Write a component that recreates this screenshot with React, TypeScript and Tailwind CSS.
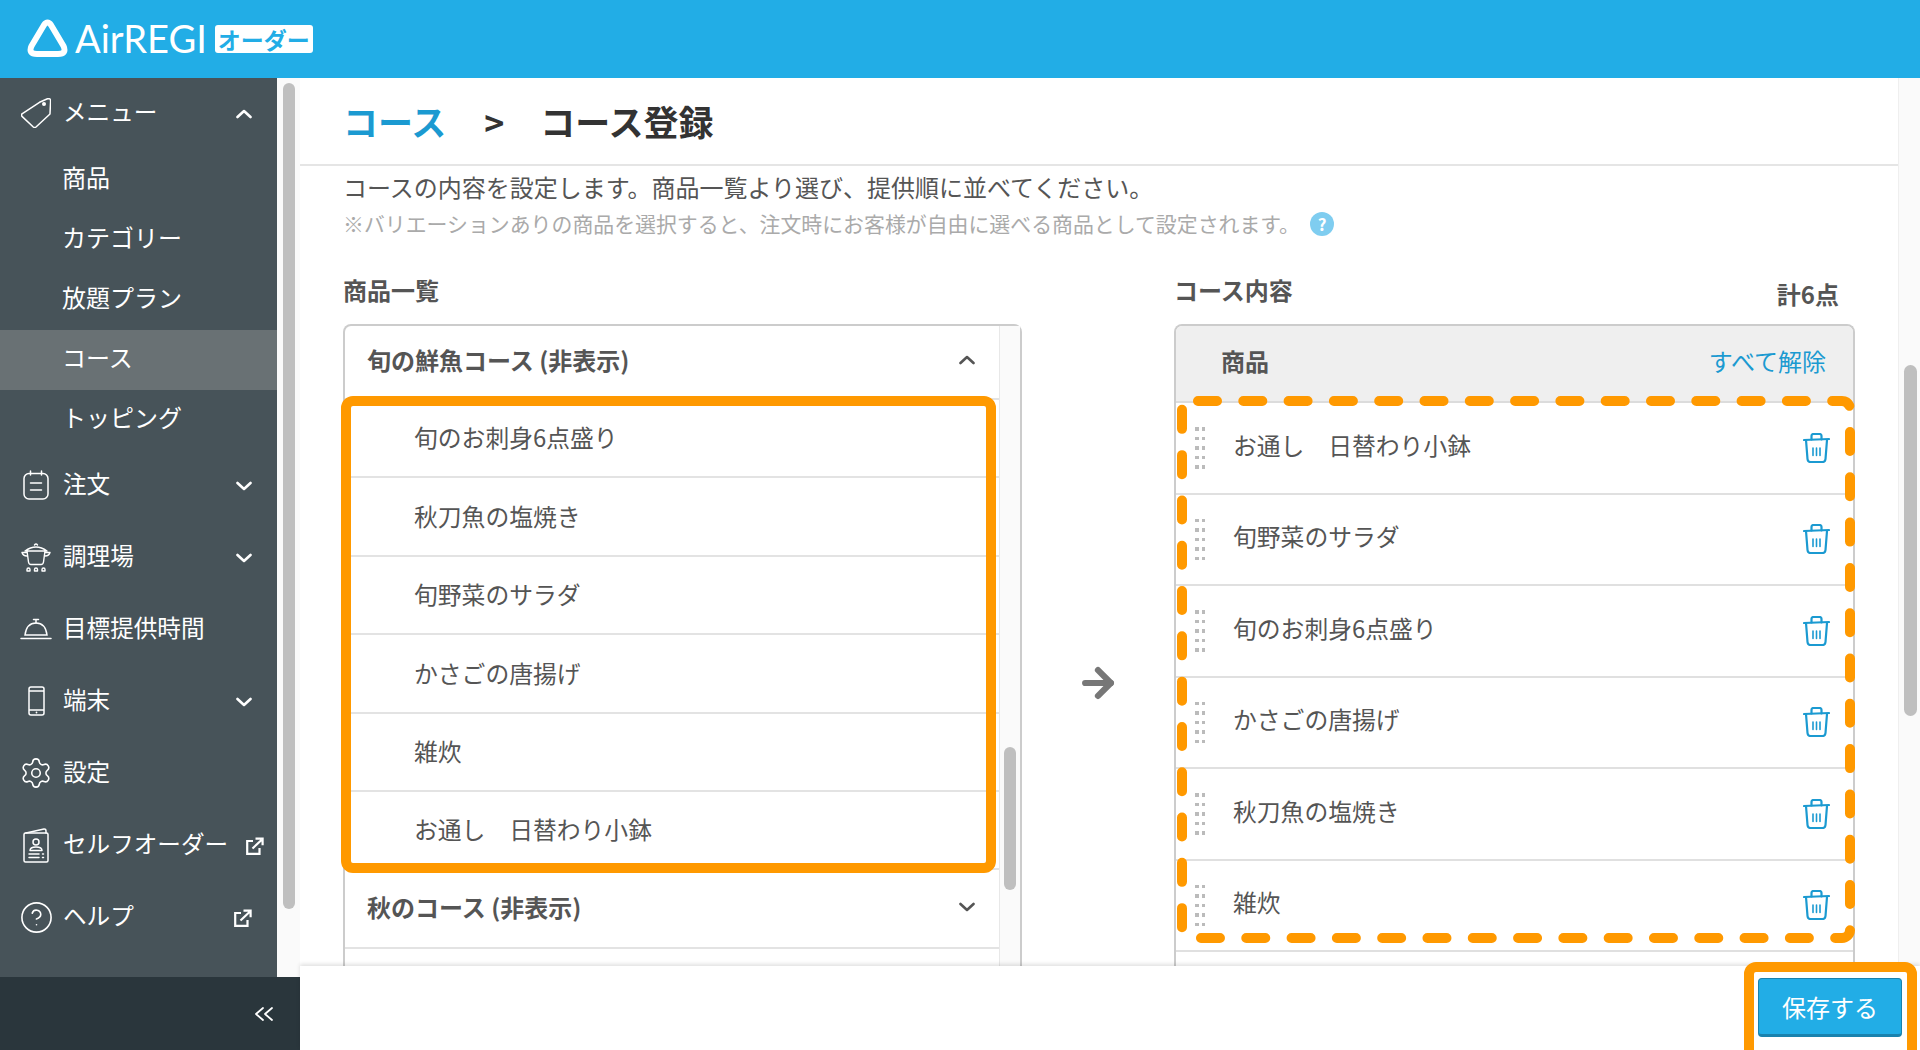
import { ArrowRight, CircleHelp, Settings } from 'lucide-react';
import type { ReactNode } from 'react';

const FONT = 'font-["Noto_Sans_CJK_JP","Noto_Sans",sans-serif]';

function Chevron({ up = false, color = '#fff' }: { up?: boolean; color?: string }) {
  return (
    <svg width="16" height="10" viewBox="0 0 16 10" fill="none" className={up ? '' : 'rotate-180'}>
      <path d="M1.5 8 L8 2 L14.5 8" stroke={color} strokeWidth="2.6" strokeLinecap="round" strokeLinejoin="round" />
    </svg>
  );
}

function ExternalIcon() {
  return (
    <svg width="18" height="18" viewBox="0 0 18 18" fill="none" stroke="#fff" strokeWidth="2.2">
      <path d="M7 4 H1.2 V16.8 H13.5 V11" />
      <path d="M6.5 11.5 L15.5 3 M9.5 1.6 H16.6 V8.2" />
    </svg>
  );
}

function TagIcon() {
  return (
    <svg width="30" height="30" viewBox="0 0 30 30" fill="none" stroke="#fff" strokeWidth="1.5" strokeLinejoin="round">
      <path d="M18.5 4.3 L26.5 0.8 Q29.6 0 29.6 3 L29 16 L15 29 Q13.6 30 12.3 29 L1 18.4 Q0 17 1 15.8 Z" />
      <circle cx="23" cy="6" r="2" fill="#fff" stroke="none" />
    </svg>
  );
}

function OrderIcon() {
  return (
    <svg width="26" height="30" viewBox="0 0 26 30" fill="none" stroke="#fff" strokeWidth="1.5" strokeLinecap="round">
      <rect x="1" y="3.5" width="24" height="25.5" rx="5" />
      <path d="M7.5 1 V5 M18.5 1 V5 M7.5 13 H18.5 M7.5 20 H18.5" />
    </svg>
  );
}

function PotIcon() {
  return (
    <svg width="30" height="30" viewBox="0 0 30 30" fill="none" stroke="#fff" strokeWidth="1.4" strokeLinecap="round" strokeLinejoin="round">
      <path d="M13.5 3 Q15 1 16.5 3" />
      <path d="M4 9 Q15 1 26 9 Z" />
      <path d="M6 9 L7.5 20 Q7.8 22.5 10 22.5 H20 Q22.2 22.5 22.5 20 L24 9" />
      <path d="M1 10.5 H5.5 M24.5 10.5 H29 M1 10.5 Q2 14 6 14 M29 10.5 Q28 14 24 14" />
      <path d="M6 29 V27.5 A1.2 1.2 0 0 1 9 27.5 V29 Z M13.5 29 V27.5 A1.2 1.2 0 0 1 16.5 27.5 V29 Z M21 29 V27.5 A1.2 1.2 0 0 1 24 27.5 V29 Z" />
    </svg>
  );
}

function ClocheIcon() {
  return (
    <svg width="32" height="22" viewBox="0 0 32 22" fill="none" stroke="#fff" strokeWidth="1.5" strokeLinecap="round">
      <path d="M16 5 V2 M13.5 1.5 H18.5" />
      <path d="M5 17 Q6.5 5 16 5 Q25.5 5 27 17 Z" />
      <path d="M1 20.5 H31" />
    </svg>
  );
}

function PhoneIcon() {
  return (
    <svg width="17" height="30" viewBox="0 0 17 30" fill="none" stroke="#fff" strokeWidth="1.5">
      <rect x="1" y="1" width="15" height="28" rx="2" />
      <path d="M1 5 H16 M1 24 H16" />
      <circle cx="8.5" cy="26.5" r="0.9" fill="#fff" stroke="none" />
    </svg>
  );
}

function BookIcon() {
  return (
    <svg width="26" height="35" viewBox="0 0 26 35" fill="none" stroke="#fff" strokeWidth="1.5" strokeLinecap="round" strokeLinejoin="round">
      <rect x="1" y="5" width="24" height="29" rx="1.5" />
      <path d="M3 5 L21 1 Q23 0.8 23 3 V5" />
      <circle cx="13" cy="14" r="3" />
      <path d="M7 22.5 Q7 19 13 19 Q19 19 19 22.5 Z" />
      <path d="M6 26 H16 M6 29.5 H16 M19.5 26 H20.5 M19.5 29.5 H20.5" />
    </svg>
  );
}

function TrashIcon() {
  return (
    <svg width="27" height="30" viewBox="0 0 27 30" fill="none" stroke="#1b9ad1" strokeWidth="2.2" strokeLinecap="round" strokeLinejoin="round" className="shrink-0">
      <path d="M1 7 L26 6" />
      <path d="M8.5 6.5 V2.8 Q8.5 1 10.5 1 H16.5 Q18.5 1 18.5 2.8 V6.5" />
      <path d="M3 7 L4.5 26 Q4.8 29 7.5 29 H19.5 Q22.2 29 22.5 26 L24 7" />
      <path d="M10 15 V22.5 M13.5 15 V22.5 M17 15 V22.5" strokeWidth="1.6" />
    </svg>
  );
}

function MenuRow({ icon, label, right }: { icon: ReactNode; label: string; right?: ReactNode }) {
  return (
    <div className="h-[72px] flex items-center text-white text-[23.6px]">
      <div className="w-[72px] pb-[2px] flex justify-center shrink-0">{icon}</div>
      <span className="-ml-[9px] pb-[5px] whitespace-nowrap">{label}</span>
      {right}
    </div>
  );
}

function SubRow({ label, active = false }: { label: string; active?: boolean }) {
  return (
    <div className={`h-[60px] flex items-center pl-[62px] pb-[6px] text-white text-[24px] ${active ? 'bg-[#697174]' : ''}`}>
      {label}
    </div>
  );
}

const chevronDown = (
  <span className="absolute left-[236px]">
    <Chevron />
  </span>
);

function Sidebar() {
  return (
    <aside className="w-[300px] shrink-0 flex flex-col">
      <div className="flex-1 flex min-h-0">
        <nav className="relative w-[277px] bg-[#475359]">
          <MenuRow
            icon={<TagIcon />}
            label="メニュー"
            right={
              <span className="absolute left-[236px]">
                <Chevron up />
              </span>
            }
          />
          <SubRow label="商品" />
          <SubRow label="カテゴリー" />
          <SubRow label="放題プラン" />
          <SubRow label="コース" active />
          <SubRow label="トッピング" />
          <MenuRow icon={<OrderIcon />} label="注文" right={chevronDown} />
          <MenuRow icon={<PotIcon />} label="調理場" right={chevronDown} />
          <MenuRow icon={<ClocheIcon />} label="目標提供時間" />
          <MenuRow icon={<PhoneIcon />} label="端末" right={chevronDown} />
          <MenuRow icon={<Settings size={34} strokeWidth={1.1} />} label="設定" />
          <MenuRow
            icon={<BookIcon />}
            label="セルフオーダー"
            right={
              <span className="absolute left-[246px]">
                <ExternalIcon />
              </span>
            }
          />
          <MenuRow
            icon={<CircleHelp size={35} strokeWidth={1.1} />}
            label="ヘルプ"
            right={
              <span className="absolute left-[234px]">
                <ExternalIcon />
              </span>
            }
          />
        </nav>
        <div className="w-[23px] bg-[#fafafa] pt-[5px] pl-[6px]">
          <div className="w-[12px] h-[826px] rounded-full bg-[#bfbfbf]" />
        </div>
      </div>
      <div className="h-[73px] bg-[#2a363c] flex items-center justify-end pr-[26px]">
        <svg width="20" height="16" viewBox="0 0 20 16" fill="none" stroke="#fff" strokeWidth="1.8" strokeLinecap="round" strokeLinejoin="round">
          <path d="M9 2 L2 8 L9 14 M18 2 L11 8 L18 14" />
        </svg>
      </div>
    </aside>
  );
}

const candidates = ['旬のお刺身6点盛り', '秋刀魚の塩焼き', '旬野菜のサラダ', 'かさごの唐揚げ', '雑炊', 'お通し　日替わり小鉢'];
const selected = ['お通し　日替わり小鉢', '旬野菜のサラダ', '旬のお刺身6点盛り', 'かさごの唐揚げ', '秋刀魚の塩焼き', '雑炊'];

function CandidateBox() {
  return (
    <div className="relative flex border-2 border-b-0 border-[#ccc] rounded-t-lg h-[700px]">
      <div className="flex-1">
        <div className="h-[74px] border-b-2 border-[#e3e3e3] flex items-center justify-between pl-[22px] pr-[24px] pb-[4px] font-bold">
          <span>旬の鮮魚コース (非表示)</span>
          <Chevron up color="#555" />
        </div>
        {candidates.map((name) => (
          <div key={name} className="h-[78.4px] border-b-2 border-[#e3e3e3] flex items-center pl-[69px] pb-[2px] text-[23.8px]">
            {name}
          </div>
        ))}
        <div className="h-[78.4px] border-b-2 border-[#e3e3e3] flex items-center justify-between pl-[22px] pr-[24px] pb-[3px] font-bold">
          <span>秋のコース (非表示)</span>
          <Chevron color="#555" />
        </div>
      </div>
      <div className="w-[21px] bg-[#fafafa] border-l border-[#e8e8e8] pl-[4px] pt-[421px]">
        <div className="w-[12px] h-[143px] rounded-full bg-[#bfbfbf]" />
      </div>
      <div className="absolute left-[-4px] top-[70px] w-[655px] h-[477px] border-[10px] border-[#ff9900] rounded-[12px]" />
    </div>
  );
}

function SelectedBox() {
  return (
    <div className="relative border-2 border-b-0 border-[#ccc] rounded-t-lg h-[700px]">
      <div className="h-[77px] bg-[#efefef] rounded-t-md border-b-2 border-[#dcdcdc] flex items-center justify-between pl-[45px] pr-[27px] pb-[5px]">
        <span className="font-bold">商品</span>
        <span className="text-[#1b9ad1]">すべて解除</span>
      </div>
      {selected.map((name) => (
        <div key={name} className="h-[91.5px] border-b-2 border-[#e0e0e0] flex items-center pl-[19px] pr-[23px]">
          <div className="grid grid-cols-2 gap-x-[3.5px] gap-y-[6px] w-[10px] shrink-0">
            {Array.from({ length: 10 }, (_, i) => (
              <span key={i} className="w-[3.5px] h-[3.5px] bg-[#bbb]" />
            ))}
          </div>
          <span className="ml-[28px] flex-1 pb-[6px] text-[23.8px]">{name}</span>
          <TrashIcon />
        </div>
      ))}
      <svg className="absolute left-[-2px] top-[70px]" width="684" height="550" viewBox="0 0 684 550" fill="none">
        <rect
          x="8"
          y="5"
          width="668"
          height="537"
          rx="8"
          stroke="#ff9900"
          strokeWidth="10"
          strokeLinecap="round"
          strokeDasharray="19 26.3"
          strokeDashoffset="-8"
        />
      </svg>
    </div>
  );
}

export default function App() {
  return (
    <div className={`${FONT} h-[1050px] w-[1920px] flex flex-col overflow-hidden bg-white text-[24px] text-[#555]`}>
      <header className="h-[78px] shrink-0 bg-[#22ade6] flex items-center pl-[27px]">
        <svg width="41" height="38" viewBox="0 0 41 38" fill="none" stroke="#fff" strokeWidth="6" strokeLinejoin="round" className="mb-[3px]">
          <path d="M17 6 Q20.5 1 24 6 L36.5 27 Q40 35 31 35 L10 35 Q1 35 4.5 27 Z" />
        </svg>
        <span className='ml-[7px] mb-[2px] font-["Lato",sans-serif] text-[38px] leading-none text-white'>AirREGI</span>
        <span className="ml-[8px] w-[98px] h-[28px] bg-white rounded-[3px] flex items-center justify-center text-[#22ade6] font-bold text-[23px] leading-none">
          オーダー
        </span>
      </header>
      <div className="flex-1 flex min-h-0">
        <Sidebar />
        <main className="flex-1 flex flex-col min-w-0">
          <div className="flex-1 flex min-h-0 overflow-hidden">
            <div className="flex-1 flex flex-col min-w-0">
              <div className="h-[88px] shrink-0 border-b-2 border-[#e5e5e5] pl-[43px] flex items-center font-bold text-[35px] text-[#333]">
                <span className="text-[#1b9ad1]">コース</span>
                <span className="ml-[38px] text-[34px]">&gt;</span>
                <span className="ml-[36px]">コース登録</span>
              </div>
              <div className="pl-[43px] pr-[43px] flex-1 min-h-0 pt-[4px]">
                <p className="h-[34px] leading-[34px]">コースの内容を設定します。商品一覧より選び、提供順に並べてください。</p>
                <div className="mt-[3px] h-[34px] flex items-center text-[20.9px] text-[#aaa]">
                  <span>※バリエーションありの商品を選択すると、注文時にお客様が自由に選べる商品として設定されます。</span>
                  <span className="ml-[10px] w-[24px] h-[24px] rounded-full bg-[#7fcdf0] text-white text-[17px] font-bold flex items-center justify-center">?</span>
                </div>
                <div className="mt-[33px] flex">
                  <section className="w-[679px] shrink-0">
                    <h2 className="h-[34px] mb-[16px] leading-[32px] font-bold">商品一覧</h2>
                    <CandidateBox />
                  </section>
                  <div className="w-[152px] shrink-0 flex justify-center pt-[387px]">
                    <ArrowRight size={44} strokeWidth={3.4} color="#777" />
                  </div>
                  <section className="w-[681px] shrink-0">
                    <div className="h-[34px] mb-[16px] flex justify-between font-bold">
                      <h2 className="leading-[32px]">コース内容</h2>
                      <span className="leading-[40px] pr-[16px]">計6点</span>
                    </div>
                    <SelectedBox />
                  </section>
                </div>
              </div>
            </div>
            <div className="w-[22px] shrink-0 bg-[#fafafa] border-l border-[#efefef] pl-[5px] pt-[287px]">
              <div className="w-[13px] h-[351px] rounded-full bg-[#bfbfbf]" />
            </div>
          </div>
          <footer className="relative z-10 h-[84px] shrink-0 bg-white shadow-[0_-2px_4px_rgba(0,0,0,0.12)] flex justify-end pt-[12px] pr-[18px]">
            <div className="relative">
              <button className="w-[144px] h-[59px] rounded-[4px] bg-[#22ade6] border border-[#1a82ae] border-b-[3px] text-white text-[24px]">
                保存する
              </button>
              <div className="absolute -left-[14px] -right-[15px] -top-[16px] -bottom-[13px] border-[10px] border-[#ff9900] rounded-[12px]" />
            </div>
          </footer>
        </main>
      </div>
    </div>
  );
}
